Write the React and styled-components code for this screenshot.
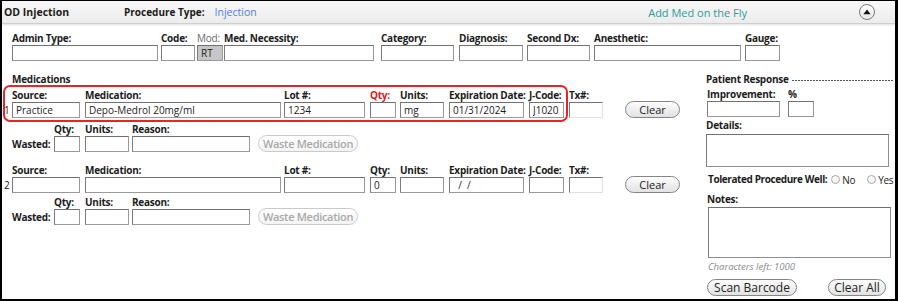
import React from 'react';
import styled, { createGlobalStyle } from 'styled-components';

const Global = createGlobalStyle`
  html, body { margin: 0; padding: 0; background: #fff; }
  body { font-family: "Open Sans", "Noto Sans", sans-serif; color: #1c1c1c; }
  * { box-sizing: border-box; }
`;

const Frame = styled.div`
  width: 898px;
  height: 301px;
  border: 2px solid #000;
  border-top-width: 1px;
  border-right-width: 3px;
  background: #fff;
  overflow: hidden;
  display: flex;
  flex-direction: column;
`;

const Header = styled.div`
  height: 23px;
  flex: none;
  display: flex;
  align-items: center;
  padding-left: 2px;
  background: linear-gradient(#f8f8f8, #ececec);
  border-bottom: 1px solid #cfcfcf;
  box-shadow: 0 1px 2px rgba(0, 0, 0, 0.12);
`;

const Title = styled.span`
  width: 120px;
  font-size: 10.5px;
  font-weight: 700;
  white-space: nowrap;
`;

const HeadLabel = styled.span`
  font-size: 10px;
  font-weight: 700;
  white-space: nowrap;
`;

const HeadValue = styled.span`
  margin-left: 10px;
  font-size: 10.5px;
  color: #4a7ff0;
  white-space: nowrap;
`;

const AddMed = styled.span`
  margin-left: auto;
  font-size: 11px;
  color: #2b9c9c;
  white-space: nowrap;
`;

const Collapse = styled.span`
  margin-left: 112px;
  margin-right: 20px;
  width: 16px;
  height: 16px;
  border-radius: 50%;
  border: 1px solid #7a7a7a;
  background: linear-gradient(#ffffff, #e6e6e6);
  display: flex;
  align-items: center;
  justify-content: center;
`;

const Body = styled.div`
  flex: 1;
  display: flex;
  flex-direction: column;
  padding-top: 8px;
`;

const TopRow = styled.div`
  display: flex;
  align-items: flex-end;
  padding-left: 10px;
`;

const Field = styled.div`
  display: flex;
  flex-direction: column;
  flex: none;
  width: ${(p) => p.$w}px;
  margin-left: ${(p) => p.$ml || 0}px;
`;

const Label = styled.span`
  height: 13px;
  line-height: 13px;
  font-size: 10px;
  letter-spacing: -0.25px;
  font-weight: ${(p) => (p.$muted ? 400 : 700)};
  color: ${(p) => (p.$red ? '#e3161b' : p.$muted ? '#6a6a6a' : '#1c1c1c')};
  white-space: nowrap;
`;

const Box = styled.input`
  display: block;
  width: 100%;
  height: ${(p) => p.$h || 16}px;
  margin: 0;
  padding: 0 0 0 3px;
  border: 1px solid #8e8e8e;
  border-top-color: #707070;
  border-left-color: #7c7c7c;
  border-bottom-color: ${(p) => (p.$light ? '#e2e2e2' : '#9a9a9a')};
  border-right-color: ${(p) => (p.$light ? '#e2e2e2' : '#9a9a9a')};
  background: ${(p) => (p.$gray ? '#c6c6c6' : '#fff')};
  font-family: inherit;
  font-size: 10px;
  color: #1c1c1c;
  outline: none;
`;

const Area = styled.textarea`
  display: block;
  width: ${(p) => p.$w}px;
  height: ${(p) => p.$h}px;
  margin: 0 0 0 ${(p) => p.$ml || 0}px;
  padding: 2px;
  border: 1px solid #8e8e8e;
  border-top-color: #707070;
  border-left-color: #7c7c7c;
  resize: none;
  font-family: inherit;
  font-size: 10px;
  outline: none;
`;

const Main = styled.div`
  display: flex;
  margin-top: 12px;
`;

const LeftCol = styled.div`
  width: 703px;
  flex: none;
  display: flex;
  flex-direction: column;
`;

const SectionTitle = styled.span`
  height: 12px;
  line-height: 12px;
  padding-left: 10px;
  font-size: 10px;
  letter-spacing: -0.25px;
  font-weight: 700;
`;

const MedBlock = styled.div`
  position: relative;
  display: flex;
  flex-direction: column;
  margin-top: ${(p) => p.$mt || 0}px;
`;

const Highlight = styled.div`
  position: absolute;
  left: 1px;
  top: 0;
  width: 565px;
  height: 37px;
  border: 2px solid #e5252b;
  border-radius: 7px;
  pointer-events: none;
`;

const MedRow = styled.div`
  display: flex;
  align-items: flex-end;
  padding-top: 4px;
`;

const RowNum = styled.span`
  width: 10px;
  flex: none;
  height: 16px;
  line-height: 17px;
  padding-left: 2px;
  font-size: 10px;
`;

const WasteRow = styled.div`
  display: flex;
  align-items: flex-end;
  padding-left: 10px;
  margin-top: ${(p) => p.$mt}px;
`;

const InlineLabel = styled.span`
  width: ${(p) => p.$w}px;
  flex: none;
  height: 16px;
  line-height: 16px;
  font-size: 10px;
  letter-spacing: -0.25px;
  font-weight: 700;
  white-space: nowrap;
`;

const Pill = styled.button`
  flex: none;
  width: ${(p) => p.$w}px;
  height: 17px;
  margin: 0 0 0 ${(p) => p.$ml || 0}px;
  padding: 0;
  border-radius: 9px;
  border: 1px solid ${(p) => (p.disabled ? '#c9c9c9' : '#858585')};
  background: ${(p) => (p.disabled ? 'linear-gradient(#ffffff, #f3f3f3)' : 'linear-gradient(#fdfdfd, #e2e2e2)')};
  font-family: inherit;
  font-size: ${(p) => p.$fs || 12}px;
  font-weight: ${(p) => (p.disabled ? 600 : 400)};
  letter-spacing: ${(p) => (p.disabled ? '-0.3px' : '0')};
  color: ${(p) => (p.disabled ? '#a9a9a9' : '#222')};
  line-height: 15px;
  white-space: nowrap;
`;

const RightCol = styled.div`
  width: 190px;
  flex: none;
  overflow: hidden;
  display: flex;
  flex-direction: column;
  padding-left: 1px;
`;

const RespTitle = styled.div`
  display: flex;
  align-items: center;
  height: 12px;
  padding-right: 2px;
`;

const RespText = styled.span`
  flex: none;
  line-height: 12px;
  font-size: 10px;
  letter-spacing: -0.25px;
  font-weight: 700;
  white-space: nowrap;
`;

const Dashes = styled.span`
  flex: 1;
  margin-left: 3px;
  margin-top: 2px;
  height: 1px;
  background: repeating-linear-gradient(90deg, #555 0 2px, transparent 2px 3px);
`;

const Row = styled.div`
  display: flex;
  align-items: flex-end;
  margin-top: ${(p) => p.$mt || 0}px;
`;

const BlockLabel = styled.span`
  display: block;
  flex: none;
  height: 13px;
  line-height: 13px;
  margin-top: ${(p) => p.$mt || 0}px;
  margin-bottom: ${(p) => p.$mb || 0}px;
  padding-left: ${(p) => p.$pl || 0}px;
  font-size: 10px;
  letter-spacing: ${(p) => (p.$tight ? '-0.4px' : '-0.25px')};
  font-weight: 700;
  white-space: nowrap;
`;

const RadioRow = styled.div`
  display: flex;
  align-items: center;
  height: 13px;
  margin-top: 6px;
  padding-left: 2px;
  white-space: nowrap;
`;

const Radio = styled.span`
  flex: none;
  width: 9px;
  height: 9px;
  margin-left: ${(p) => p.$ml}px;
  border-radius: 50%;
  border: 1px solid #a8a8a8;
  background: radial-gradient(circle at 40% 35%, #ffffff, #e9e9e9);
`;

const RadioText = styled.span`
  flex: none;
  margin-left: 2px;
  font-size: 10px;
  letter-spacing: -0.3px;
  color: #1c1c1c;
`;

const Hint = styled.span`
  display: block;
  height: 12px;
  line-height: 12px;
  margin-top: 3px;
  padding-left: 2px;
  font-size: 9.5px;
  font-style: italic;
  color: #8a8a8a;
`;

const ButtonRow = styled.div`
  display: flex;
  margin-top: 6px;
  padding-left: 1px;
`;

function MedEntry({ num, highlight, mt, wmt, values = {} }) {
  return (
    <MedBlock $mt={mt}>
      {highlight && <Highlight />}
      <MedRow>
        <RowNum>{num}</RowNum>
        <Field $w={68}>
          <Label>Source:</Label>
          <Box readOnly value={values.source || ''} />
        </Field>
        <Field $w={196} $ml={5}>
          <Label>Medication:</Label>
          <Box readOnly value={values.med || ''} />
        </Field>
        <Field $w={81} $ml={3}>
          <Label>Lot #:</Label>
          <Box readOnly value={values.lot || ''} />
        </Field>
        <Field $w={26} $ml={5}>
          <Label $red={highlight}>Qty:</Label>
          <Box readOnly value={values.qty || ''} />
        </Field>
        <Field $w={44} $ml={4}>
          <Label>Units:</Label>
          <Box readOnly value={values.units || ''} />
        </Field>
        <Field $w={75} $ml={5}>
          <Label>Expiration Date:</Label>
          <Box readOnly value={values.exp || ''} />
        </Field>
        <Field $w={35} $ml={5}>
          <Label>J-Code:</Label>
          <Box readOnly value={values.jcode || ''} />
        </Field>
        <Field $w={34} $ml={5}>
          <Label>Tx#:</Label>
          <Box readOnly value="" $light />
        </Field>
        <Pill $w={55} $ml={22} $fs={11}>Clear</Pill>
      </MedRow>
      <WasteRow $mt={wmt}>
        <InlineLabel $w={42}>Wasted:</InlineLabel>
        <Field $w={26}>
          <Label>Qty:</Label>
          <Box readOnly value="" />
        </Field>
        <Field $w={44} $ml={5}>
          <Label>Units:</Label>
          <Box readOnly value="" />
        </Field>
        <Field $w={118} $ml={3}>
          <Label>Reason:</Label>
          <Box readOnly value="" />
        </Field>
        <Pill $w={100} $ml={8} $fs={11} disabled>
          Waste Medication
        </Pill>
      </WasteRow>
    </MedBlock>
  );
}

export default function App() {
  return (
    <>
      <Global />
      <Frame>
        <Header>
          <Title>OD Injection</Title>
          <HeadLabel>Procedure Type:</HeadLabel>
          <HeadValue>Injection</HeadValue>
          <AddMed>Add Med on the Fly</AddMed>
          <Collapse>
            <svg width="8" height="6" viewBox="0 0 8 6">
              <path d="M4 0.5 L7.6 5.2 L0.4 5.2 Z" fill="#111" />
            </svg>
          </Collapse>
        </Header>
        <Body>
          <TopRow>
            <Field $w={146}>
              <Label>Admin Type:</Label>
              <Box readOnly value="" />
            </Field>
            <Field $w={34} $ml={3}>
              <Label>Code:</Label>
              <Box readOnly value="" />
            </Field>
            <Field $w={26} $ml={2}>
              <Label $muted>Mod:</Label>
              <Box readOnly value="RT" $gray />
            </Field>
            <Field $w={150} $ml={1}>
              <Label>Med. Necessity:</Label>
              <Box readOnly value="" />
            </Field>
            <Field $w={73} $ml={7}>
              <Label>Category:</Label>
              <Box readOnly value="" />
            </Field>
            <Field $w={64} $ml={5}>
              <Label>Diagnosis:</Label>
              <Box readOnly value="" />
            </Field>
            <Field $w={63} $ml={4}>
              <Label>Second Dx:</Label>
              <Box readOnly value="" />
            </Field>
            <Field $w={147} $ml={4}>
              <Label>Anesthetic:</Label>
              <Box readOnly value="" />
            </Field>
            <Field $w={35} $ml={4}>
              <Label>Gauge:</Label>
              <Box readOnly value="" />
            </Field>
          </TopRow>
          <Main>
            <LeftCol>
              <SectionTitle>Medications</SectionTitle>
              <MedEntry
                num="1"
                highlight
                wmt={5}
                values={{
                  source: 'Practice',
                  med: 'Depo-Medrol 20mg/ml',
                  lot: '1234',
                  units: 'mg',
                  exp: '01/31/2024',
                  jcode: 'J1020',
                }}
              />
              <MedEntry num="2" mt={8} wmt={3} values={{ qty: '0', exp: '  /  /' }} />
            </LeftCol>
            <RightCol>
              <RespTitle>
                <RespText>Patient Response</RespText>
                <Dashes />
              </RespTitle>
              <Row $mt={3}>
                <Field $w={73} $ml={1}>
                  <Label>Improvement:</Label>
                  <Box readOnly value="" />
                </Field>
                <Field $w={26} $ml={8}>
                  <Label>%</Label>
                  <Box readOnly value="" />
                </Field>
              </Row>
              <BlockLabel $mt={2} $mb={2}>Details:</BlockLabel>
              <Area readOnly $w={183} $h={33} />
              <RadioRow>
                <BlockLabel $tight>Tolerated Procedure Well:</BlockLabel>
                <Radio $ml={4} />
                <RadioText>No</RadioText>
                <Radio $ml={12} />
                <RadioText>Yes</RadioText>
              </RadioRow>
              <BlockLabel $mt={7} $mb={1} $pl={1}>Notes:</BlockLabel>
              <Area readOnly $w={183} $h={51} $ml={2} />
              <Hint>Characters left: 1000</Hint>
              <ButtonRow>
                <Pill $w={90}>Scan Barcode</Pill>
                <Pill $w={58} $ml={31}>Clear All</Pill>
              </ButtonRow>
            </RightCol>
          </Main>
        </Body>
      </Frame>
    </>
  );
}
